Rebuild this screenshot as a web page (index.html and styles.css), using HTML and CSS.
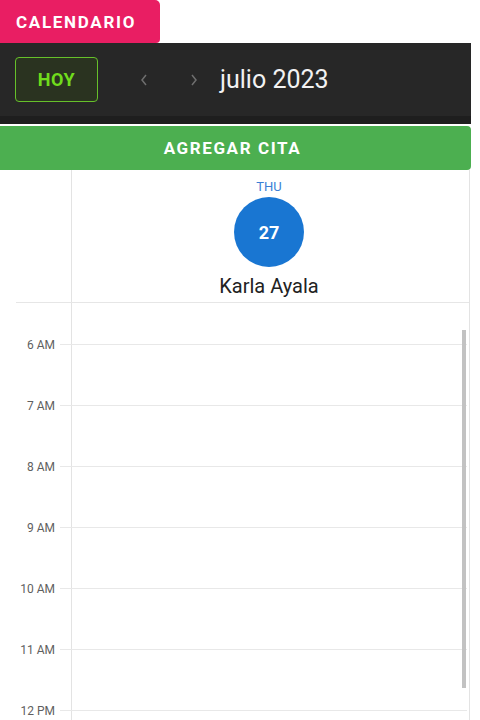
FILE: index.html
```html
<!DOCTYPE html>
<html lang="es">
<head>
<meta charset="utf-8">
<title>Calendario</title>
<link rel="stylesheet" href="styles.css">
</head>
<body>
<div class="tab">CALENDARIO</div>
<div class="toolbar">
  <button class="today">HOY</button>
  <span class="nav">
    <svg width="8" height="12" viewBox="0 0 8 12"><path d="M6 1 L2 6 L6 11" fill="none" stroke="#6f6f6f" stroke-width="1.5"/></svg>
  </span>
  <span class="nav">
    <svg width="8" height="12" viewBox="0 0 8 12"><path d="M2 1 L6 6 L2 11" fill="none" stroke="#6f6f6f" stroke-width="1.5"/></svg>
  </span>
  <span class="title">julio 2023</span>
</div>
<button class="add">AGREGAR CITA</button>
<div class="cal">
  <div class="head">
    <div class="gutter"></div>
    <div class="day">
      <div class="dow">THU</div>
      <div class="num">27</div>
      <div class="name">Karla Ayala</div>
    </div>
  </div>
  <div class="body">
    <div class="row"><span class="lbl">6 AM</span><span class="line"></span></div>
    <div class="row"><span class="lbl">7 AM</span><span class="line"></span></div>
    <div class="row"><span class="lbl">8 AM</span><span class="line"></span></div>
    <div class="row"><span class="lbl">9 AM</span><span class="line"></span></div>
    <div class="row"><span class="lbl">10 AM</span><span class="line"></span></div>
    <div class="row"><span class="lbl">11 AM</span><span class="line"></span></div>
    <div class="row"><span class="lbl">12 PM</span><span class="line"></span></div>
    <div class="scrollbar"></div>
  </div>
</div>
</body>
</html>
```
FILE: styles.css
```css
* { box-sizing: border-box; }
html, body { margin: 0; padding: 0; background: #fff; }
body { font-family: Roboto, "Noto Sans", sans-serif; width: 480px; height: 720px; overflow: hidden; }

.tab {
  width: 160px; height: 43px;
  background: #e91e63; color: #fff;
  font-weight: 700; font-size: 17px; letter-spacing: 1.7px;
  padding-left: 16px; line-height: 45px;
  border-radius: 0 5px 4px 0;
}

.toolbar {
  width: 471px; height: 81px;
  background: #272727;
  border-bottom: 8px solid #1e1e1e;
  display: flex; align-items: center;
  padding: 0 0 0 15px;
}
.today {
  width: 83px; height: 45px;
  background: #2a3320; border: 1px solid #66c02a; border-radius: 4px;
  color: #70dc1c; font: 700 18px Roboto, sans-serif; letter-spacing: 0.6px;
  padding: 0;
}
.nav { width: 50px; display: flex; justify-content: center; }
.nav:first-of-type { margin-left: 21px; }
.title { color: #f2f2f2; font-size: 25px; margin-left: 1px; }

.add {
  display: block; margin-top: 2px;
  width: 471px; height: 44px;
  background: #4caf50; color: #fff; border: 0;
  border-radius: 0 4px 4px 0;
  font: 700 17px Roboto, sans-serif; letter-spacing: 1.6px;
  padding: 0 6px 0 0;
}

.cal { width: 470px; border-right: 1px solid #e3e3e3; }
.head {
  display: flex; margin-left: 16px;
  border-bottom: 1px solid #e6e6e6;
}
.gutter { width: 56px; border-right: 1px solid #e3e3e3; }
.day { flex: 1; display: flex; flex-direction: column; align-items: center; padding: 9px 3px 4px 0; }
.dow { font-size: 13px; line-height: 16px; color: #3a7fd6; }
.num {
  width: 70px; height: 70px; border-radius: 50%;
  background: #1976d2; color: #fff;
  font-weight: 700; font-size: 18px;
  display: flex; align-items: center; justify-content: center;
  margin-top: 2px;
}
.name { margin-top: 7px; font-size: 20px; line-height: 24px; color: #222; }

.body {
  position: relative;
  height: 417px; overflow: hidden;
  padding-top: 11px;
  background: linear-gradient(#e3e3e3, #e3e3e3) no-repeat 71px 0 / 1px 100%;
}
.row {
  height: 61px;
  display: grid; grid-template-columns: 55px 1fr; column-gap: 5px;
  align-items: center;
}
.lbl { text-align: right; font-size: 12px; color: #5f5f5f; }
.line { height: 1px; background: #e8e8e8; margin-right: 2px; }
.scrollbar {
  position: absolute; left: 462px; top: 27px;
  width: 4px; height: 358px; background: #c2c2c2;
}
```
